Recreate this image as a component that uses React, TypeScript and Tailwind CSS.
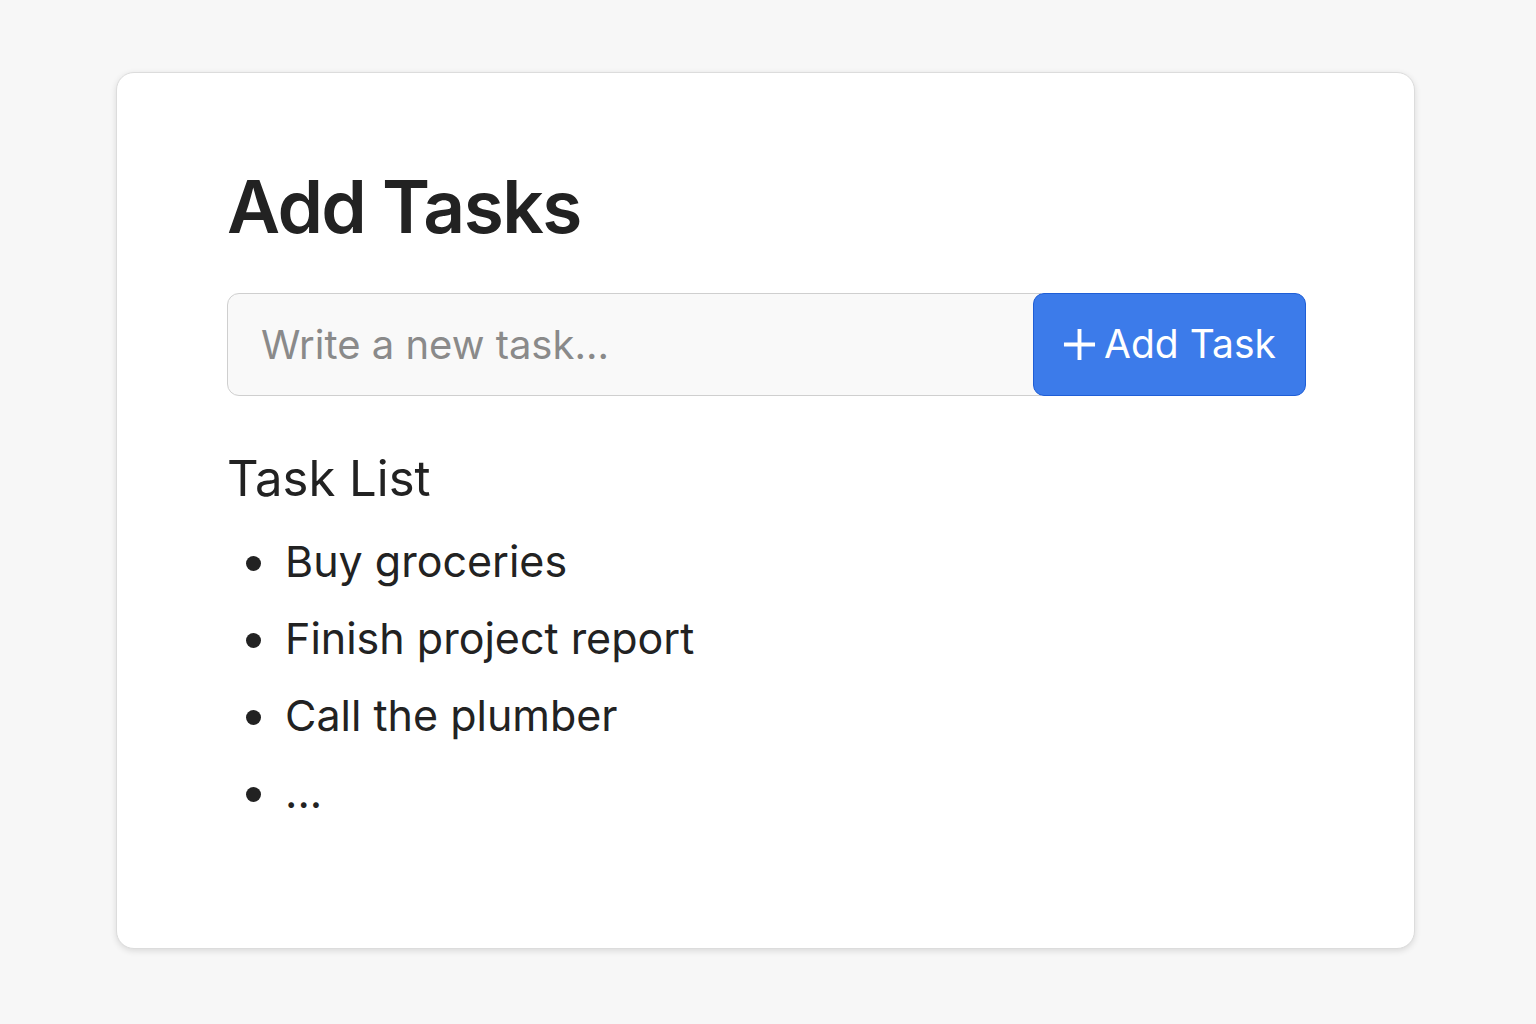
export default function App() {
  const tasks = ["Buy groceries", "Finish project report", "Call the plumber", "..."];
  return (
    <div
      className="min-h-screen bg-[#f7f7f7] pt-[72px] pl-[116px] text-[#222]"
      style={{ fontFamily: "Inter, 'Noto Sans', sans-serif" }}
    >
      <div className="h-[877px] w-[1299px] rounded-[18px] border border-[#dcdcdc] bg-white shadow-[0_2px_6px_rgba(0,0,0,0.12)] pl-[110px] pr-[108px] pt-[97px]">
        <h1 className="text-[73px] font-semibold leading-none tracking-[-1.6px]">Add Tasks</h1>
        <div className="mt-[50px] flex h-[103px]">
          <div className="flex-1 rounded-l-[12px] border border-[#cfcfcf] bg-[#f9f9f9] flex items-center pl-[33px] -mr-[8px]">
            <span className="text-[40px] text-[#8a8a8a]">Write a new task...</span>
          </div>
          <button className="w-[273px] rounded-[11px] border border-[#1f5ed6] bg-[#3c7bea] text-white flex items-center justify-center gap-[8px] text-[39px]">
            <svg width="33" height="33" viewBox="0 0 34 34" fill="none" stroke="white" strokeWidth="4">
              <path d="M17 1v32M1 17h32" />
            </svg>
            <span>Add Task</span>
          </button>
        </div>
        <h2 className="mt-[58px] text-[49px] leading-none">Task List</h2>
        <ul className="mt-[35px] flex flex-col gap-[30px]">
          {tasks.map((t) => (
            <li key={t} className="flex items-center text-[43px] leading-[47px]">
              <span className="ml-[19px] mr-[24px] mt-[4px] h-[15px] w-[15px] rounded-full bg-[#222]" />
              {t}
            </li>
          ))}
        </ul>
      </div>
    </div>
  );
}
